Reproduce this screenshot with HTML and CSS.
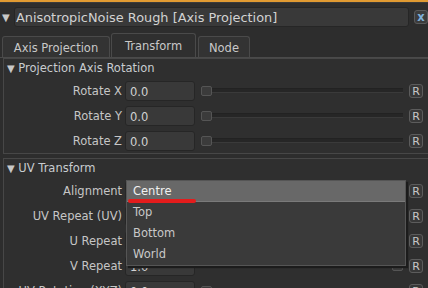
FILE: index.html
```html
<!DOCTYPE html>
<html lang="en">
<head>
    <meta charset="UTF-8">
    <title>AnisotropicNoise Rough</title>
    <link rel="stylesheet" href="styles.css">
</head>
<body>
    <div class="topline"></div>
    <div class="header">
        <span class="tri">&#9660;</span>
        <div class="name">AnisotropicNoise Rough [Axis Projection]</div>
        <div class="close">x</div>
    </div>

    <div class="tabs">
        <div class="tab">Axis Projection</div>
        <div class="tab active">Transform</div>
        <div class="tab">Node</div>
    </div>

    <div class="section">
        <div class="sec-head"><span class="tri">&#9660;</span> Projection Axis Rotation</div>
        <div class="row">
            <label>Rotate X</label>
            <div class="field">0.0</div>
            <div class="slider"><span class="thumb"></span><span class="track"></span></div>
            <div class="reset">R</div>
        </div>
        <div class="row">
            <label>Rotate Y</label>
            <div class="field">0.0</div>
            <div class="slider"><span class="thumb"></span><span class="track"></span></div>
            <div class="reset">R</div>
        </div>
        <div class="row">
            <label>Rotate Z</label>
            <div class="field">0.0</div>
            <div class="slider"><span class="thumb"></span><span class="track"></span></div>
            <div class="reset">R</div>
        </div>
    </div>

    <div class="section">
        <div class="sec-head"><span class="tri">&#9660;</span> UV Transform</div>
        <div class="row">
            <label>Alignment</label>
            <div class="field"></div>
            <div class="slider"></div>
            <div class="reset">R</div>

            <div class="menu">
                <div class="item on">Centre</div>
                <div class="item">Top</div>
                <div class="item">Bottom</div>
                <div class="item">World</div>
                <span class="mark"></span>
            </div>
        </div>
        <div class="row">
            <label>UV Repeat (UV)</label>
            <div class="field"></div>
            <div class="slider"><span class="track"></span><span class="thumb"></span></div>
            <div class="reset">R</div>
        </div>
        <div class="row">
            <label>U Repeat</label>
            <div class="field"></div>
            <div class="slider"><span class="track"></span><span class="thumb"></span></div>
            <div class="reset">R</div>
        </div>
        <div class="row">
            <label>V Repeat</label>
            <div class="field">1.0</div>
            <div class="slider"><span class="track"></span><span class="thumb"></span></div>
            <div class="reset">R</div>
        </div>
        <div class="row">
            <label>UV Rotation (XYZ)</label>
            <div class="field">0.0</div>
            <div class="slider"><span class="thumb"></span><span class="track"></span></div>
            <div class="reset">R</div>
        </div>
    </div>
</body>
</html>
```

FILE: styles.css
```css
body {
    margin: 0;
    background: #2d2d2d;
    color: #c6c6c6;
    font-family: "DejaVu Sans", Verdana, sans-serif;
    font-size: 11.5px;
    width: 428px;
    height: 288px;
    overflow: hidden;
}
.topline {
    height: 2px;
    background: #e09a32;
    border-bottom: 1px solid #3a3a3a;
}
.header {
    display: flex;
    align-items: center;
    height: 20px;
    margin-top: 4px;
    padding-left: 2px;
}
.tri {
    font-size: 10px;
    color: #c8c8c8;
}
.header .tri {
    width: 12px;
}
.name {
    width: 398px;
    height: 20px;
    line-height: 19px;
    box-sizing: border-box;
    padding-left: 1px;
    background: #393939;
    border: 1px solid #262626;
    border-radius: 3px;
    color: #d2d2d2;
    font-size: 12.9px;
    white-space: nowrap;
}
.close {
    margin-left: 5px;
    width: 14px;
    height: 14px;
    line-height: 12px;
    box-sizing: border-box;
    border: 1px solid #5a5a5a;
    border-radius: 3px;
    background: #3c3c3c;
    color: #7fb0d8;
    text-align: center;
    font-weight: bold;
}
.tabs {
    display: flex;
    align-items: flex-end;
    gap: 1px;
    height: 24px;
    margin-top: 6px;
    padding-left: 2px;
    border-bottom: 1px solid #4a4a4a;
}
.tab {
    height: 21px;
    line-height: 22px;
    box-sizing: border-box;
    background: #333333;
    border: 1px solid #4a4a4a;
    border-bottom: none;
    border-radius: 3px 3px 0 0;
    color: #c8c8c8;
    text-align: center;
    white-space: nowrap;
}
.tab:nth-child(1) {
    width: 108px;
}
.tab:nth-child(2) {
    width: 85px;
}
.tab:nth-child(3) {
    width: 52px;
    margin-left: 1px;
}
.tab.active {
    height: 24px;
    line-height: 24px;
    background: #2f2f2f;
}
.section {
    margin-left: 3px;
    border: 1px solid #474747;
    border-right: none;
    background: #2f2f2f;
}
.section + .section {
    margin-top: 4px;
}
.sec-head {
    height: 19px;
    line-height: 19px;
    padding-left: 3px;
    color: #c8ccd0;
}
.row {
    display: flex;
    align-items: center;
    height: 25px;
    position: relative;
}
.row label {
    width: 118px;
    text-align: right;
    padding-right: 3px;
    white-space: nowrap;
}
.field {
    width: 70px;
    height: 20px;
    line-height: 20px;
    box-sizing: border-box;
    padding-left: 4px;
    background: #393939;
    border: 1px solid #262626;
    border-radius: 3px;
    color: #d2d2d2;
}
.slider {
    display: flex;
    align-items: center;
    width: 202px;
    margin-left: 6px;
}
.thumb {
    width: 11px;
    height: 10px;
    box-sizing: border-box;
    background: #3b3b3b;
    border: 1px solid #555555;
    border-radius: 2px;
}
.track {
    flex: 1;
    height: 3px;
    background: #262626;
    border-top: 1px solid #222;
    border-bottom: 1px solid #3a3a3a;
}
.reset {
    margin-left: 6px;
    width: 14px;
    height: 14px;
    line-height: 13px;
    box-sizing: border-box;
    border: 1px solid #5c5c5c;
    border-radius: 3px;
    background: #383838;
    color: #c8c8c8;
    text-align: center;
    font-size: 11px;
}
.menu {
    position: absolute;
    left: 122px;
    top: 2px;
    width: 278px;
    background: #3a3a3a;
    border: 1px solid #555555;
    box-shadow: 2px 2px 1px #1c1c1c;
    z-index: 2;
}
.item {
    height: 21px;
    line-height: 21px;
    padding-left: 6px;
    color: #c8c8c8;
}
.item.on {
    background: #686868;
    color: #f0f0f0;
    border-bottom: 1px solid #7a7a7a;
    height: 20px;
}
.mark {
    position: absolute;
    left: 1px;
    top: 18px;
    width: 68px;
    height: 4px;
    border-radius: 2px;
    background: #e41c1c;
}
```
